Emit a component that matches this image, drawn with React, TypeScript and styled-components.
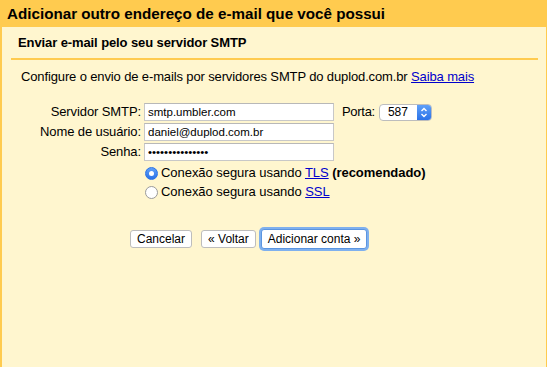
import styled, { createGlobalStyle } from 'styled-components';

const GlobalStyle = createGlobalStyle`
  html, body {
    margin: 0;
    padding: 0;
    background: #fff6cf;
  }
  body {
    font-family: "Liberation Sans", Arial, sans-serif;
    color: #000;
  }
`;

const Frame = styled.div`
  height: 367px;
  box-sizing: border-box;
  border-left: 2px solid #ffcb4f;
  border-right: 1px solid #ffcb4f;
  background: #fff6cf;
  overflow: hidden;
`;

const Header = styled.div`
  height: 27px;
  background: #ffcb4f;
  padding-left: 5px;
  font-size: 15.2px;
  font-weight: bold;
  line-height: 27px;
  white-space: nowrap;
`;

const SectionTitle = styled.div`
  margin: 0 8px 0 9px;
  padding: 8px 0 0 7px;
  height: 23px;
  border-bottom: 2px solid #ffcb4f;
  font-size: 13px;
  font-weight: bold;
  line-height: 16px;
  letter-spacing: -0.1px;
`;

const Intro = styled.p`
  margin: 9px 0 0 19px;
  font-size: 13px;
  line-height: 16px;
  letter-spacing: -0.13px;
`;

const Link = styled.a`
  color: #0000cc;
  text-decoration: underline;
  cursor: pointer;
`;

const Form = styled.div`
  margin-top: 18px;
  display: grid;
  grid-template-columns: 139px auto;
  column-gap: 3px;
  row-gap: 2px;
  font-size: 13px;
`;

const Label = styled.label`
  text-align: right;
  line-height: 18px;
  white-space: nowrap;
  letter-spacing: -0.1px;
`;

const Field = styled.div`
  display: flex;
  align-items: center;
  gap: 8px;
`;

const Input = styled.input`
  box-sizing: border-box;
  width: 190px;
  height: 18px;
  margin: 0;
  padding: 0 3px;
  border: 1px solid #c8c8c8;
  border-top-color: #b8b8b8;
  background: #fff;
  font-family: "Liberation Sans", Arial, sans-serif;
  font-size: 11.5px;
  color: #000;
  outline: none;
`;

const PortLabel = styled.span`
  line-height: 18px;
  letter-spacing: -0.3px;
`;

const Select = styled.div`
  display: flex;
  align-items: stretch;
  box-sizing: border-box;
  width: 53px;
  height: 17px;
  border: 1px solid #bdbdbd;
  border-radius: 4px;
  background: #fff;
  overflow: hidden;
  font-size: 12px;
  margin-left: -4px;
`;

const SelectValue = styled.span`
  flex: 1;
  padding-left: 8px;
  line-height: 15px;
`;

const SelectArrows = styled.span`
  width: 14px;
  background: linear-gradient(#5fa0f8, #2a72e8);
  display: flex;
  align-items: center;
  justify-content: center;
`;

const Options = styled.div`
  grid-column: 2;
  margin-top: 2px;
  display: flex;
  flex-direction: column;
  gap: 3px;
`;

const Option = styled.label`
  display: flex;
  align-items: center;
  gap: 3px;
  height: 16px;
  line-height: 16px;
  margin-left: 1px;
  letter-spacing: -0.05px;
`;

const Radio = styled.span<{ $checked?: boolean }>`
  box-sizing: border-box;
  width: 13px;
  height: 13px;
  border-radius: 50%;
  border: 1px solid ${(p) => (p.$checked ? '#2a72e8' : '#9a9a9a')};
  background: ${(p) => (p.$checked ? 'linear-gradient(#5fa0f8, #2a72e8)' : '#fff')};
  display: flex;
  align-items: center;
  justify-content: center;
  &::after {
    content: '';
    display: ${(p) => (p.$checked ? 'block' : 'none')};
    width: 5px;
    height: 5px;
    border-radius: 50%;
    background: #fff;
  }
`;

const Buttons = styled.div`
  margin: 29px 0 0 128px;
  display: flex;
  align-items: center;
`;

const Button = styled.button<{ $primary?: boolean; $gap?: number }>`
  box-sizing: border-box;
  height: ${(p) => (p.$primary ? '20px' : '18px')};
  margin-left: ${(p) => p.$gap ?? 0}px;
  padding: 0 6px;
  border: 1px solid ${(p) => (p.$primary ? '#5b95e0' : '#bdbdbd')};
  border-radius: 3px;
  background: #fff;
  font-family: "Liberation Sans", Arial, sans-serif;
  font-size: 12px;
  color: #000;
  line-height: 16px;
  box-shadow: ${(p) => (p.$primary ? '0 0 0 2px #7fb0ee' : 'none')};
`;

const App = () => {
  return (
    <>
      <GlobalStyle />
      <Frame>
        <Header>Adicionar outro endereço de e-mail que você possui</Header>
        <SectionTitle>Enviar e-mail pelo seu servidor SMTP</SectionTitle>
        <Intro>
          Configure o envio de e-mails por servidores SMTP do duplod.com.br{' '}
          <Link>Saiba mais</Link>
        </Intro>
        <Form>
          <Label>Servidor SMTP:</Label>
          <Field>
            <Input defaultValue="smtp.umbler.com" />
            <PortLabel>Porta:</PortLabel>
            <Select>
              <SelectValue>587</SelectValue>
              <SelectArrows>
                <svg width="8" height="11" viewBox="0 0 8 11">
                  <path
                    d="M1.5 4 L4 1.5 L6.5 4 M1.5 7 L4 9.5 L6.5 7"
                    fill="none"
                    stroke="#fff"
                    strokeWidth="1.4"
                  />
                </svg>
              </SelectArrows>
            </Select>
          </Field>
          <Label>Nome de usuário:</Label>
          <Field>
            <Input defaultValue="daniel@duplod.com.br" />
          </Field>
          <Label>Senha:</Label>
          <Field>
            <Input type="password" defaultValue="xxxxxxxxxxxxxxx" />
          </Field>
          <Options>
            <Option>
              <Radio $checked />
              <span>
                Conexão segura usando <Link>TLS</Link> <b>(recomendado)</b>
              </span>
            </Option>
            <Option>
              <Radio />
              <span>
                Conexão segura usando <Link>SSL</Link>
              </span>
            </Option>
          </Options>
        </Form>
        <Buttons>
          <Button>Cancelar</Button>
          <Button $gap={9}>« Voltar</Button>
          <Button $primary $gap={5}>Adicionar conta »</Button>
        </Buttons>
      </Frame>
    </>
  );
};

export default App;
